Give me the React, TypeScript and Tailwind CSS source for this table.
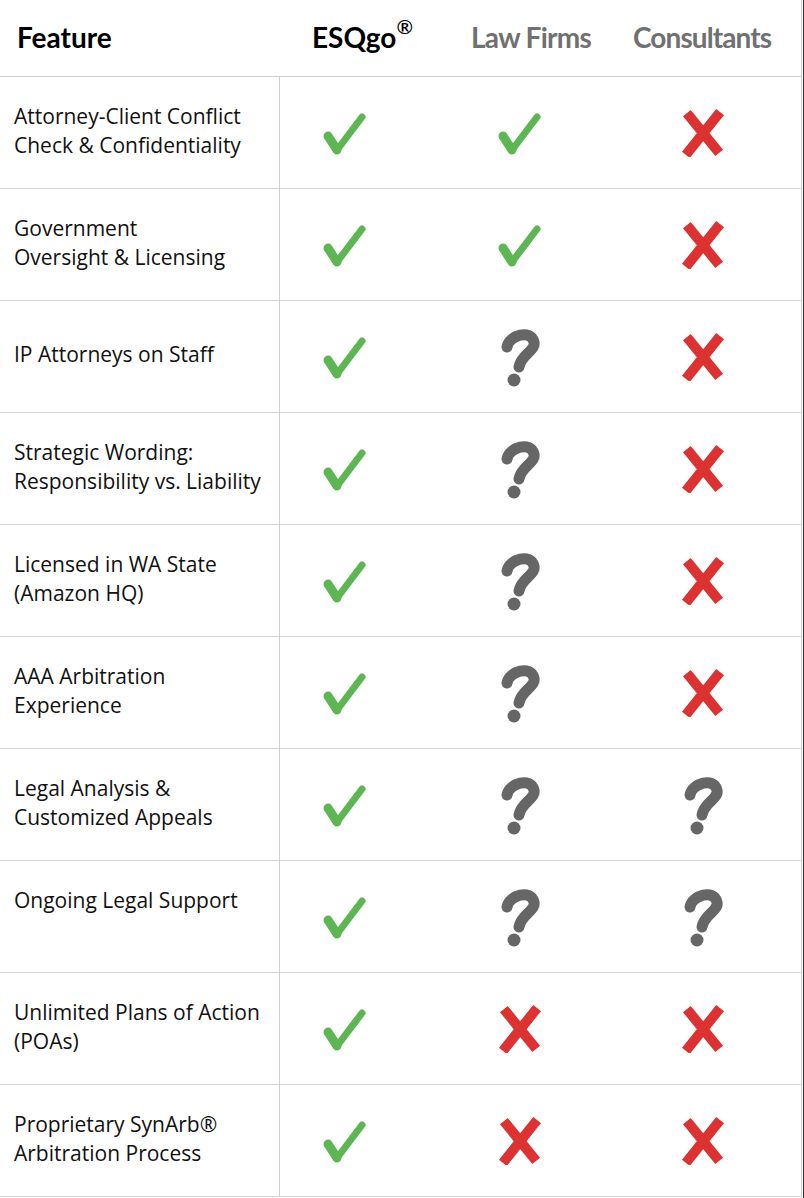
import React from "react";

type Mark = "yes" | "no" | "maybe";

const rows: { label: string[]; marks: Mark[] }[] = [
  { label: ["Attorney-Client Conflict", "Check & Confidentiality"], marks: ["yes", "yes", "no"] },
  { label: ["Government", "Oversight & Licensing"], marks: ["yes", "yes", "no"] },
  { label: ["IP Attorneys on Staff"], marks: ["yes", "maybe", "no"] },
  { label: ["Strategic Wording:", "Responsibility vs. Liability"], marks: ["yes", "maybe", "no"] },
  { label: ["Licensed in WA State", "(Amazon HQ)"], marks: ["yes", "maybe", "no"] },
  { label: ["AAA Arbitration", "Experience"], marks: ["yes", "maybe", "no"] },
  { label: ["Legal Analysis &", "Customized Appeals"], marks: ["yes", "maybe", "maybe"] },
  { label: ["Ongoing Legal Support", "\u00a0"], marks: ["yes", "maybe", "maybe"] },
  { label: ["Unlimited Plans of Action", "(POAs)"], marks: ["yes", "no", "no"] },
  { label: ["Proprietary SynArb®", "Arbitration Process"], marks: ["yes", "no", "no"] },
];

function Check() {
  return (
    <svg width="48" height="48" viewBox="0 0 48 48">
      <path d="M7 27 L16 41" stroke="#5db653" strokeWidth="9" strokeLinecap="round" fill="none" />
      <path d="M16 41 L41 8" stroke="#5db653" strokeWidth="7" strokeLinecap="round" fill="none" />
    </svg>
  );
}

function Cross() {
  return (
    <svg width="48" height="48" viewBox="0 0 48 48">
      <path d="M11 8 L37 40" stroke="#dc3232" strokeWidth="10" strokeLinecap="square" fill="none" />
      <path d="M38 7 L10 42" stroke="#dc3232" strokeWidth="10" strokeLinecap="square" fill="none" />
    </svg>
  );
}

function Question() {
  return (
    <svg width="50" height="64" viewBox="0 0 50 64">
      <path
        d="M12 22 C14 10, 36 4, 39 17 C41 26, 26 29, 24 42"
        stroke="#666666"
        strokeWidth="11"
        strokeLinecap="round"
        fill="none"
      />
      <circle cx="19" cy="55" r="6.5" fill="#666666" />
    </svg>
  );
}

function Icon({ mark }: { mark: Mark }) {
  if (mark === "yes") return <Check />;
  if (mark === "no") return <Cross />;
  return <Question />;
}

export default function App() {
  return (
    <div className="w-[804px] h-[1198px] overflow-hidden bg-white border-r border-[#333]">
      <div className="w-[802px] border-r border-[#cfcfcf]">
        <div
          className="grid grid-cols-[280px_130px_220px_146px] h-[77px] items-center border-b border-[#cfcfcf] pb-[2px] text-[28px] font-bold"
          style={{ fontFamily: "Lato, sans-serif" }}
        >
          <div className="pl-[17px] text-black">Feature</div>
          <div className="pl-[32px] text-black whitespace-nowrap">
            ESQgo<sup className="text-[20px] font-semibold -top-[0.7em]">®</sup>
          </div>
          <div className="pl-[61px] text-[#707070] whitespace-nowrap tracking-[-0.7px]">Law Firms</div>
          <div className="pl-[3px] text-[#707070] whitespace-nowrap tracking-[-0.9px]">Consultants</div>
        </div>
        {rows.map((row, i) => (
          <div
            key={i}
            className="grid grid-cols-[280px_130px_220px_146px] h-[112px] border-b border-[#d4d4d4]"
          >
            <div
              className="flex flex-col justify-center pl-[14px] pb-[4px] border-r border-[#cfcfcf] text-[21px] leading-[29px] text-[#111]"
              style={{ fontFamily: "'Open Sans', sans-serif" }}
            >
              {row.label.map((l, j) => (
                <span key={j} className="whitespace-nowrap">
                  {l}
                </span>
              ))}
            </div>
            {row.marks.map((m, j) => (
              <div key={j} className="flex items-center justify-center">
                <Icon mark={m} />
              </div>
            ))}
          </div>
        ))}
      </div>
    </div>
  );
}
